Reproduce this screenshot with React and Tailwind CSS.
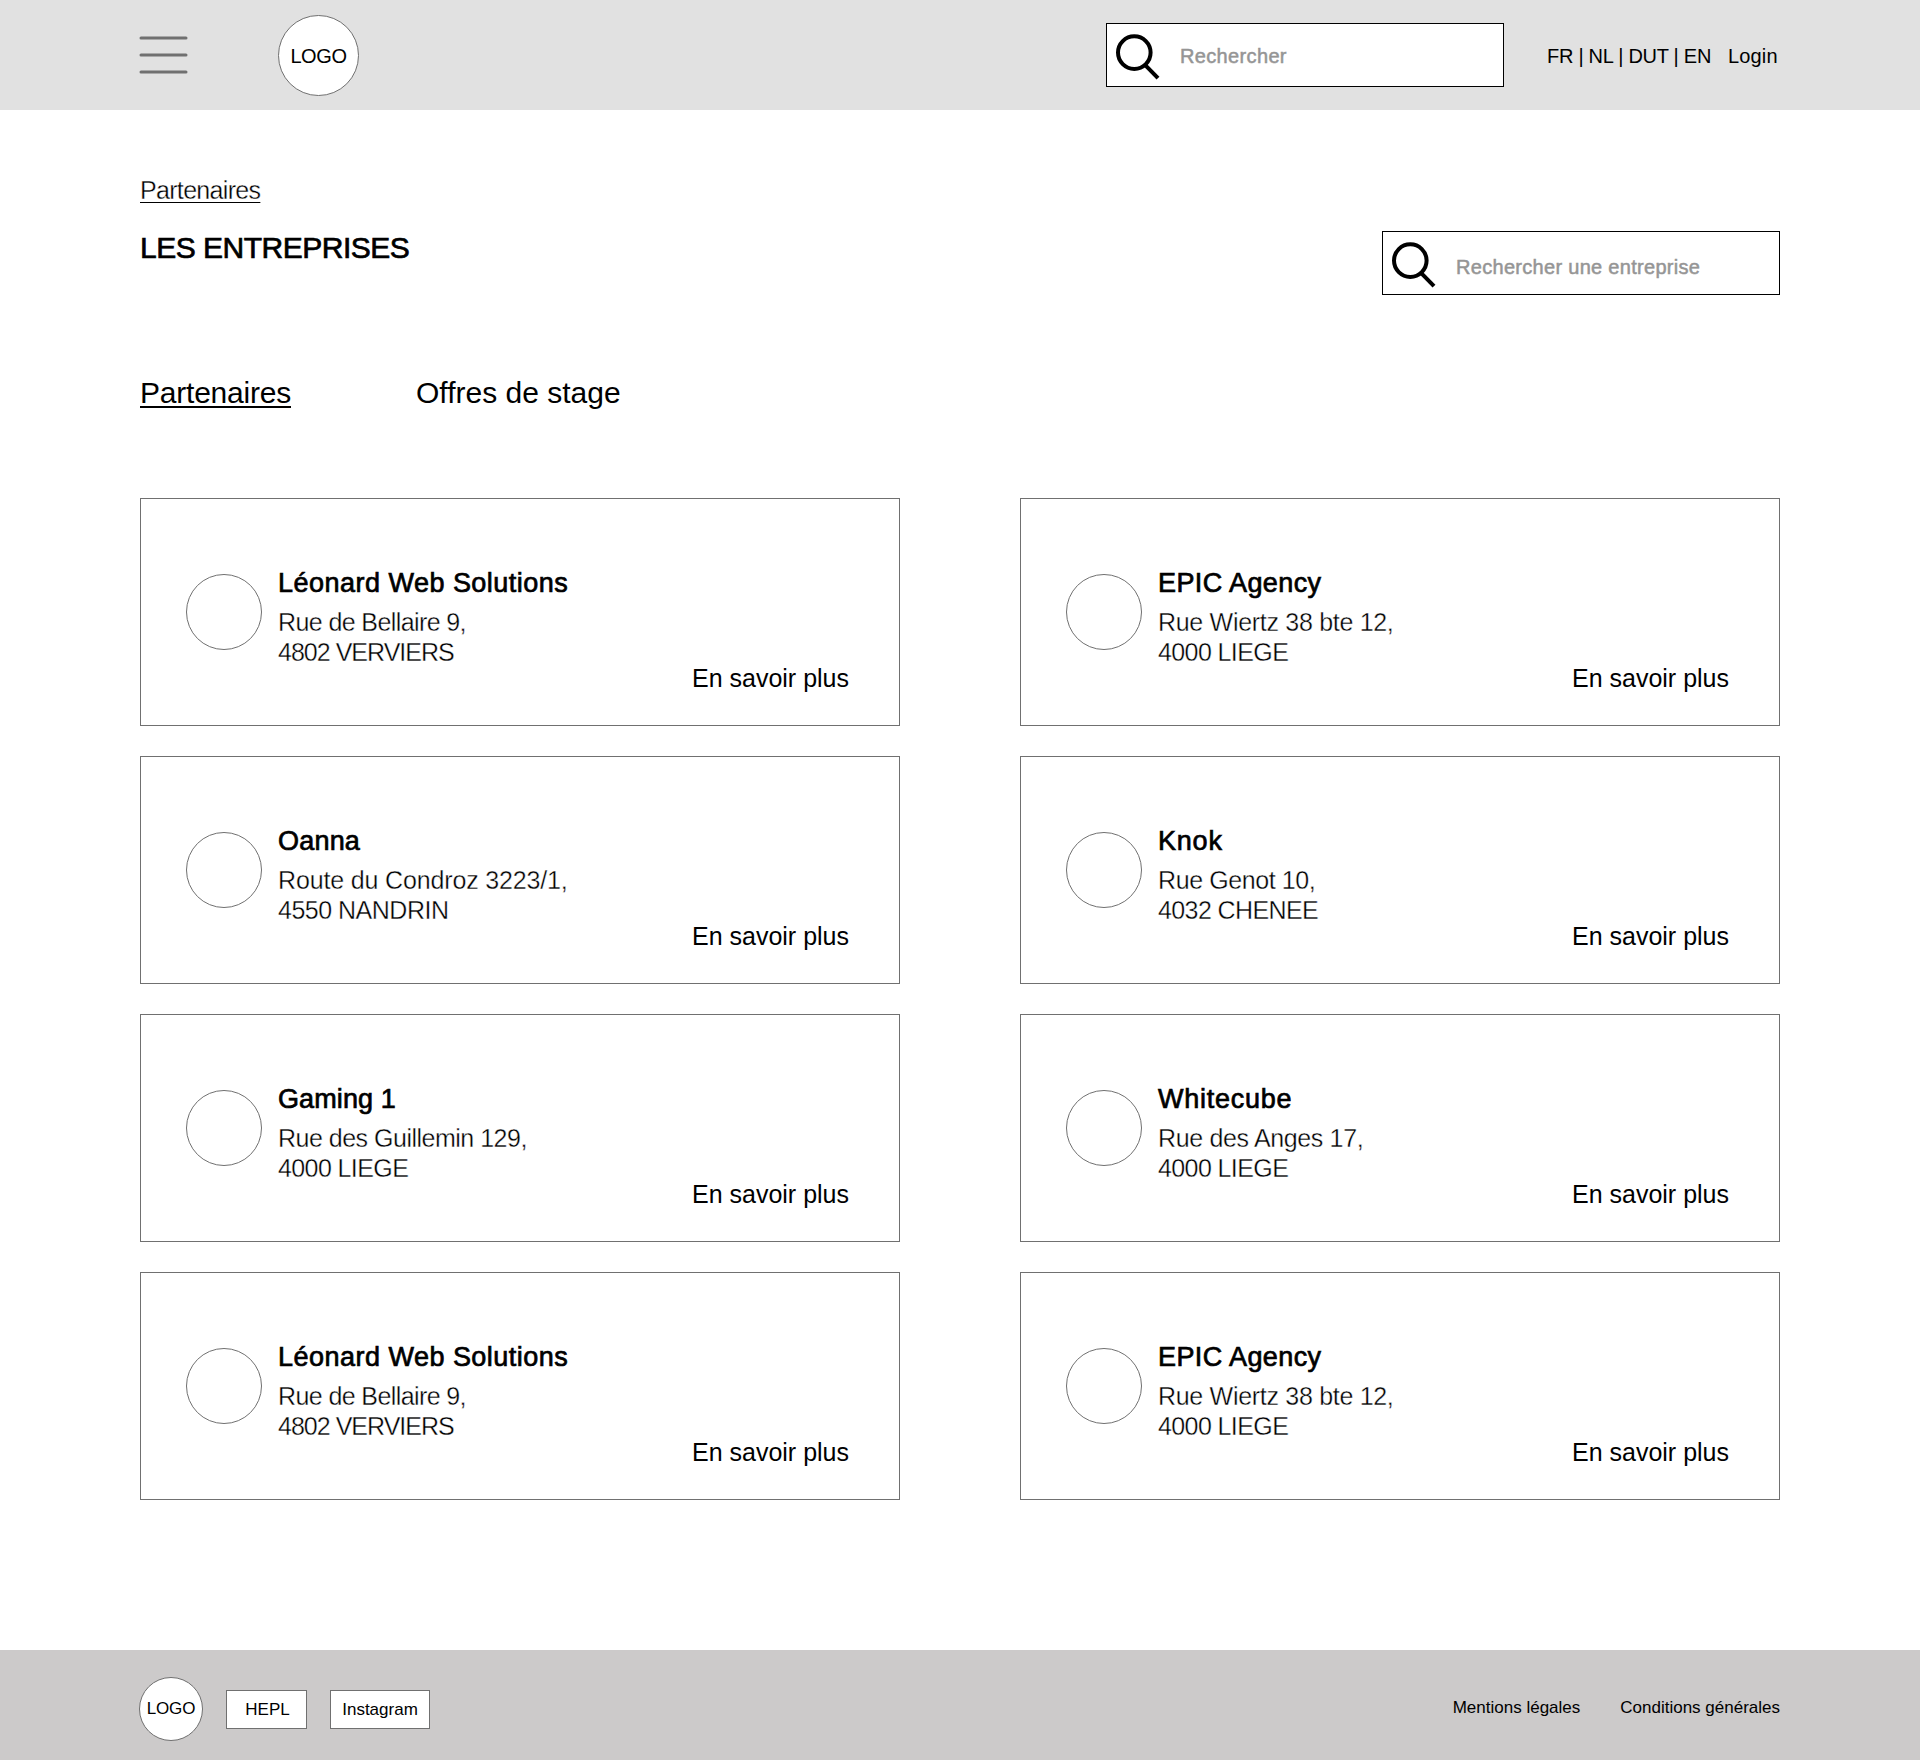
const companies = [
  { name: "Léonard Web Solutions", nameTrack: "tracking-[0.48px]", street: "Rue de Bellaire 9,", streetTrack: "tracking-[-0.6px]", city: "4802 VERVIERS", cityTrack: "tracking-[-0.98px]" },
  { name: "EPIC Agency", nameTrack: "tracking-[0.4px]", street: "Rue Wiertz 38 bte 12,", streetTrack: "tracking-[-0.3px]", city: "4000 LIEGE", cityTrack: "tracking-[-0.6px]" },
  { name: "Oanna", nameTrack: "tracking-[0.2px]", street: "Route du Condroz 3223/1,", streetTrack: "tracking-[-0.15px]", city: "4550 NANDRIN", cityTrack: "tracking-[-0.5px]" },
  { name: "Knok", nameTrack: "tracking-[0.8px]", street: "Rue Genot 10,", streetTrack: "tracking-[-0.4px]", city: "4032 CHENEE", cityTrack: "tracking-[-0.6px]" },
  { name: "Gaming 1", nameTrack: "tracking-[0.1px]", street: "Rue des Guillemin 129,", streetTrack: "tracking-[-0.5px]", city: "4000 LIEGE", cityTrack: "tracking-[-0.6px]" },
  { name: "Whitecube", nameTrack: "tracking-[0.75px]", street: "Rue des Anges 17,", streetTrack: "tracking-[-0.35px]", city: "4000 LIEGE", cityTrack: "tracking-[-0.6px]" },
];
const cards = [...companies, companies[0], companies[1]];

function SearchBox({ label, textClass }) {
  return (
    <div className="flex h-16 w-[398px] shrink-0 border border-black bg-white">
      <svg className="h-[62px] w-[56px] shrink-0" viewBox="1 1 56 62" fill="none" stroke="#000" strokeWidth="4">
        <circle cx="28.3" cy="29.6" r="16.3" />
        <path d="M39 41.8 L52 55.2" />
      </svg>
      <span className={`whitespace-nowrap pl-[17px] text-[20px] leading-[30px] text-[#959595] [-webkit-text-stroke:0.5px_#959595] ${textClass}`}>
        {label}
      </span>
    </div>
  );
}

function CompanyCard({ company }) {
  return (
    <article className="flex h-[228px] border border-[#707070] pl-[45px]">
      <div className="mt-[75px] size-[76px] shrink-0 rounded-full border border-[#707070]" />
      <div className="ml-4 mt-[66px] whitespace-nowrap">
        <h2 className={`text-[27px] leading-9 [-webkit-text-stroke:0.7px_#000] ${company.nameTrack}`}>{company.name}</h2>
        <p className="mt-1.5 text-[25px] leading-[30px] [-webkit-text-stroke:0.35px_#fff]">
          <span className={`block ${company.streetTrack}`}>{company.street}</span>
          <span className={`block ${company.cityTrack}`}>{company.city}</span>
        </p>
      </div>
      <a className="mb-8 ml-auto mr-[50px] self-end whitespace-nowrap text-[25px] leading-[30px]">En savoir plus</a>
    </article>
  );
}

export default function App() {
  return (
    <div className="flex h-[1760px] w-[1920px] flex-col bg-white font-['Liberation_Sans',Arial,sans-serif] text-black">
      <header className="flex h-[110px] bg-[#e1e1e1] pl-[139px]">
        <svg className="mt-9 h-10 w-[49px]" viewBox="0 0 49 40" stroke="#707070" strokeWidth="3" strokeLinecap="round">
          <path d="M2 2H47M2 19H47M2 36H47" />
        </svg>
        <div className="ml-[90px] mt-[15px] flex size-[81px] items-center justify-center rounded-full border border-[#707070] bg-white">
          <span className="pt-px text-[20px] leading-[30px] tracking-[-0.4px]">LOGO</span>
        </div>
        <div className="ml-[747px] mt-[23px]">
          <SearchBox label="Rechercher" textClass="pt-[17px] tracking-[0.35px]" />
        </div>
        <nav className="ml-[43px] mt-[41px] flex whitespace-nowrap text-[20px] leading-[30px]">
          <span className="w-[181px] tracking-[-0.27px]">FR | NL | DUT | EN</span>
          <a className="tracking-[0.15px]">Login</a>
        </nav>
      </header>

      <main className="w-[1780px] flex-1 pl-[140px] pt-[65px]">
        <a className="block w-fit text-[25px] leading-[30px] tracking-[-0.68px] underline decoration-black decoration-1 underline-offset-[3px] [-webkit-text-stroke:0.35px_#fff]">
          Partenaires
        </a>
        <div className="mt-[26px] flex justify-between">
          <h1 className="-mt-px text-[30px] leading-9 tracking-[-0.5px] [-webkit-text-stroke:0.7px_#000]">LES ENTREPRISES</h1>
          <SearchBox label="Rechercher une entreprise" textClass="pt-5 tracking-[0.3px]" />
        </div>
        <nav className="mt-20 flex text-[30px] leading-9">
          <a className="w-[276px] tracking-[-0.22px]">
            <span className="underline decoration-2 underline-offset-[3px]">Partenaires</span>
          </a>
          <a>Offres de stage</a>
        </nav>
        <section className="mt-[87px] grid grid-cols-2 gap-x-[120px] gap-y-[30px]">
          {cards.map((company, i) => (
            <CompanyCard key={i} company={company} />
          ))}
        </section>
      </main>

      <footer className="flex h-[110px] bg-[#cccaca] pl-[139px] pr-[140px] text-[17px] leading-5">
        <div className="mt-[27px] flex size-16 items-center justify-center rounded-full border border-[#707070] bg-white">
          <span className="tracking-[-0.2px]">LOGO</span>
        </div>
        <div className="ml-[23px] mt-10 flex h-[39px] w-[81px] items-center justify-center border border-[#707070] bg-white pl-[2px] pt-px">
          HEPL
        </div>
        <div className="ml-[23px] mt-10 flex h-[39px] w-[100px] items-center justify-center border border-[#707070] bg-white pt-px">
          Instagram
        </div>
        <nav className="ml-auto mt-12 flex gap-10">
          <a>Mentions légales</a>
          <a>Conditions générales</a>
        </nav>
      </footer>
    </div>
  );
}
